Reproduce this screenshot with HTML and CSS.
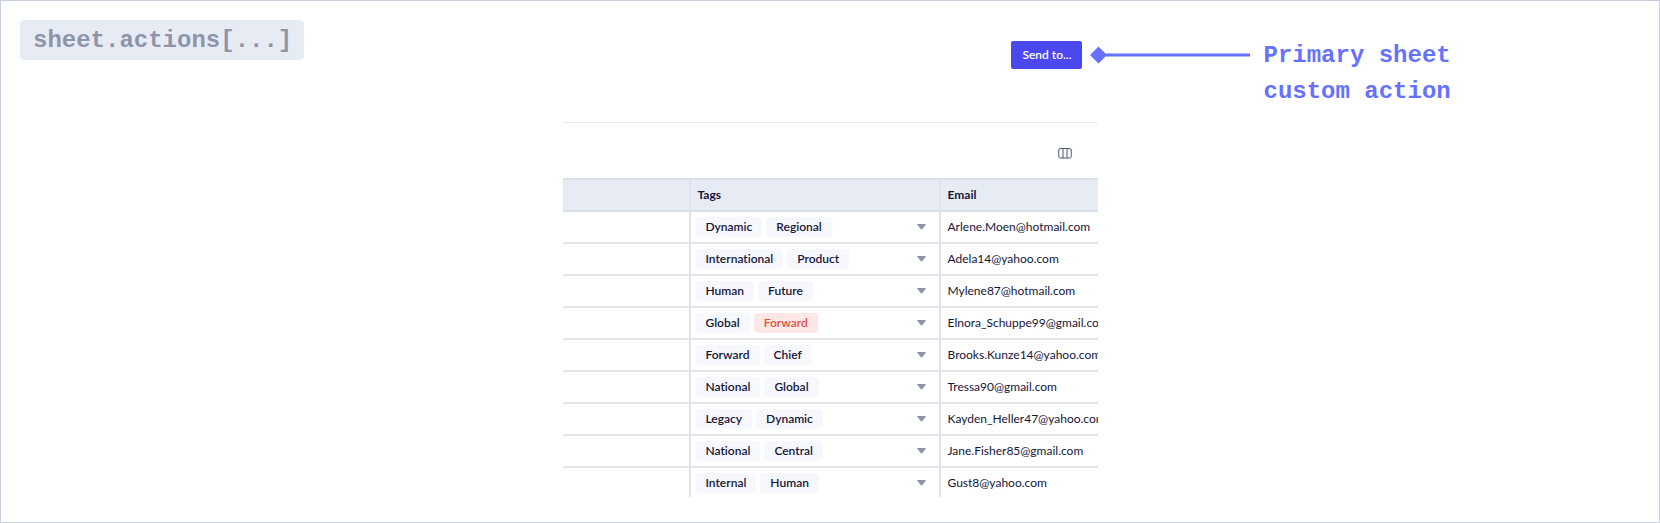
FILE: index.html
```
<!DOCTYPE html>
<html lang="en">
<head>
<meta charset="utf-8">
<title>Sheet actions</title>
<link rel="stylesheet" href="styles.css">
</head>
<body>
<svg width="0" height="0" class="defs" aria-hidden="true"><symbol id="caret" viewBox="0 0 9 6"><path d="M.4 0h8.200q.6 0 .2.600L5 5.200q-.5.500-1 0L.2.600Q-.2 0 .4 0z" fill="#8b91a8"/></symbol></svg>
<main class="frame">
  <div class="aside"><code class="badge">sheet.actions[...]</code></div>
  <section class="panel">
    <header class="panel-head"><button class="send" type="button">Send to...</button></header>
    <div class="toolbar">
      <button class="columns" type="button" aria-label="Columns">
        <svg width="14" height="12" viewBox="0 0 14 12" fill="none" stroke="#4c5573"><rect x=".75" y="1.500" width="12.500" height="9.500" rx="1.500"/><path d="M5 1.500v9.500M9 1.500v9.500"/></svg>
      </button>
    </div>
    <table class="sheet">
      <colgroup><col class="col-blank"><col class="col-tags"><col></colgroup>
      <thead><tr><th></th><th>Tags</th><th>Email</th></tr></thead>
      <tbody>
        <tr><td></td><td><div class="tags"><span class="tag">Dynamic</span><span class="tag">Regional</span><svg class="caret"><use href="#caret"/></svg></div></td><td>Arlene.Moen@hotmail.com</td></tr>
        <tr><td></td><td><div class="tags"><span class="tag">International</span><span class="tag">Product</span><svg class="caret"><use href="#caret"/></svg></div></td><td>Adela14@yahoo.com</td></tr>
        <tr><td></td><td><div class="tags"><span class="tag">Human</span><span class="tag">Future</span><svg class="caret"><use href="#caret"/></svg></div></td><td>Mylene87@hotmail.com</td></tr>
        <tr><td></td><td><div class="tags"><span class="tag">Global</span><span class="tag tag-alert">Forward</span><svg class="caret"><use href="#caret"/></svg></div></td><td>Elnora_Schuppe99@gmail.com</td></tr>
        <tr><td></td><td><div class="tags"><span class="tag">Forward</span><span class="tag">Chief</span><svg class="caret"><use href="#caret"/></svg></div></td><td>Brooks.Kunze14@yahoo.com</td></tr>
        <tr><td></td><td><div class="tags"><span class="tag">National</span><span class="tag">Global</span><svg class="caret"><use href="#caret"/></svg></div></td><td>Tressa90@gmail.com</td></tr>
        <tr><td></td><td><div class="tags"><span class="tag">Legacy</span><span class="tag">Dynamic</span><svg class="caret"><use href="#caret"/></svg></div></td><td>Kayden_Heller47@yahoo.com</td></tr>
        <tr><td></td><td><div class="tags"><span class="tag">National</span><span class="tag">Central</span><svg class="caret"><use href="#caret"/></svg></div></td><td>Jane.Fisher85@gmail.com</td></tr>
        <tr><td></td><td><div class="tags"><span class="tag">Internal</span><span class="tag">Human</span><svg class="caret"><use href="#caret"/></svg></div></td><td>Gust8@yahoo.com</td></tr>
      </tbody>
    </table>
  </section>
  <div class="note">
    <svg class="pointer" width="160" height="18" viewBox="0 0 160 18" fill="#6672ff"><path d="M8.500.500l7 7H160v3H15.500l-7 7L0 9z"/></svg>
    <p class="note-text">Primary sheet<br>custom action</p>
  </div>
</main>
</body>
</html>
```
FILE: styles.css
```
* { box-sizing: border-box; }
body {
  margin: 0;
  background: #fff;
  color: #15153a;
  font: 12px/20px "Lato", sans-serif;
  font-variant-ligatures: none;
}
button { font: inherit; border: 0; padding: 0; cursor: pointer; }
.defs { display: none; }
.frame {
  display: grid;
  grid-template-columns: 1fr 535px 1fr;
  min-height: 100vh;
  padding-bottom: 24px;
  border: 1px solid #c9cfdf;
}
.aside { padding: 19px; }
.badge {
  display: inline-block;
  padding: 5px 12px 3px 13px;
  border-radius: 4px;
  background: #e7ecf4;
  color: #8e94aa;
  font: bold 24px/32px "Liberation Mono", monospace;
}
.panel { overflow: hidden; }
.panel-head {
  display: flex;
  justify-content: flex-end;
  padding: 40px 16px 53px;
  border-bottom: 1px solid #e3e5ea;
}
.send {
  padding: 4px 10px 4px 11px;
  border-radius: 2px;
  background: #4c48ef;
  color: #fff;
  font-weight: 600;
}
.toolbar {
  display: flex;
  justify-content: flex-end;
  align-items: center;
  height: 55px;
  padding: 4px 26px 0;
}
.columns { display: flex; background: none; }
.sheet {
  width: 100%;
  table-layout: fixed;
  border-collapse: separate;
  border-spacing: 0;
  border-top: 2px solid #dadfea;
}
.col-blank { width: 126px; }
.col-tags { width: 250px; }
th, td {
  height: 32px;
  padding: 0 7px;
  border-bottom: 2px solid #e3e6ed;
  text-align: left;
  white-space: nowrap;
  font-weight: 400;
}
td:nth-child(2) { padding: 0 5px; }
th {
  background: #e7ecf4;
  border-bottom-color: #dadfea;
  font-weight: 700;
}
th + th, td + td { border-left: 2px solid #dfe2ec; }
tbody tr:last-child td { height: 29px; border-bottom: 0; }
.tags { display: flex; align-items: center; gap: 4px; }
.tag {
  padding: 0 10px;
  border-radius: 4px;
  background: #f7f8fd;
  font-weight: 600;
}
.tag-alert { background: #ffe7e6; color: #df4f3b; }
.caret {
  width: 9px;
  height: 6px;
  margin: 0 8px 0 auto;
}
.note { display: flex; gap: 14px; margin-left: -8px; padding-top: 37px; z-index: 1; }
.pointer { flex: none; margin-top: 8px; }
.note-text {
  margin: 0;
  color: #6672ff;
  font: bold 24px/36px "Liberation Mono", monospace;
}
```
